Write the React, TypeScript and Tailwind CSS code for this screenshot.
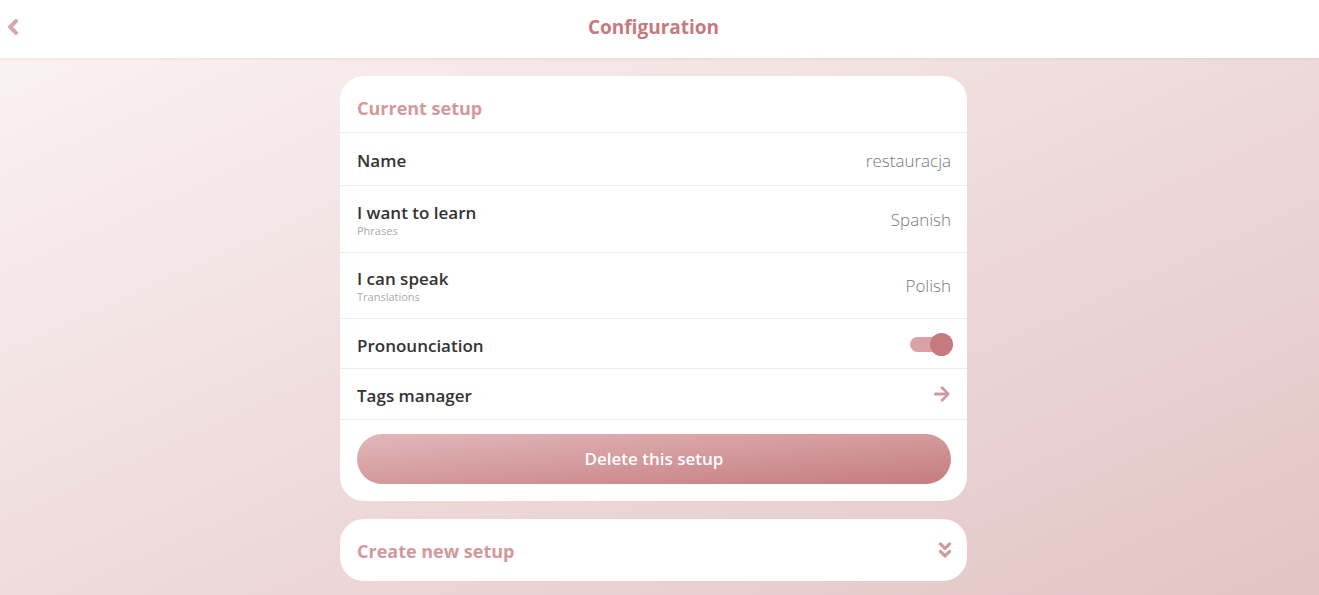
import { FaAngleLeft, FaArrowRight, FaAngleDoubleDown } from 'react-icons/fa';

interface RowProps {
  label: string;
  sub?: string;
  children: React.ReactNode;
  height: string;
}

function Row({ label, sub, children, height }: RowProps) {
  return (
    <div className={`flex items-center justify-between pl-[17px] pr-[16px] border-b border-[#ececec] ${height} ${sub ? 'pt-[1px]' : 'pt-[4px]'}`}>
      <div className="flex flex-col">
        <span className="text-[17px] font-semibold text-[#333] leading-tight">{label}</span>
        {sub && <span className="text-[11px] text-[#aaa] leading-tight mt-[1px]">{sub}</span>}
      </div>
      <div className="text-[17px] font-light text-[#777]">{children}</div>
    </div>
  );
}

export default function App() {
  return (
    <div
      className="min-h-[595px] flex flex-col bg-gradient-to-br from-[#fbf4f4] to-[#e3c4c5]"
      style={{ fontFamily: '"Open Sans", "Noto Sans", sans-serif' }}
    >
      {/* Header */}
      <header className="h-[58px] bg-white shadow-[0_1px_3px_rgba(0,0,0,0.06)] flex items-center relative pr-[12px]">
        <button className="absolute left-[0px] top-[14px] text-[#d8a7ab]">
          <FaAngleLeft size={26} />
        </button>
        <h1 className="w-full text-center text-[19px] font-bold text-[#c47a7e] -mt-[4px]">Configuration</h1>
      </header>

      <main className="flex flex-col items-center pt-[18px] gap-[18px] pb-[14px] pr-[12px]">
        {/* Current setup card */}
        <section className="w-[627px] bg-white rounded-[24px] overflow-hidden">
          <div className="h-[57px] flex items-center px-[17px] pt-[8px] border-b border-[#ececec]">
            <h2 className="text-[18px] font-bold text-[#d4989b]">Current setup</h2>
          </div>
          <Row label="Name" height="h-[53px]">restauracja</Row>
          <Row label="I want to learn" sub="Phrases" height="h-[67px]">Spanish</Row>
          <Row label="I can speak" sub="Translations" height="h-[66px]">Polish</Row>
          <Row label="Pronounciation" height="h-[50px]">
            <div className="relative w-[43px] h-[23px] flex items-center -mt-[3px] -mr-[2px]">
              <div className="w-[34px] h-[15px] rounded-full bg-[#d9a2a5]" />
              <div className="absolute right-0 top-0 w-[23px] h-[23px] rounded-full bg-[#c47a7e]" />
            </div>
          </Row>
          <Row label="Tags manager" height="h-[51px]">
            <FaArrowRight size={18} className="text-[#d0999b] -mt-[4px]" />
          </Row>
          <div className="pl-[17px] pr-[16px] pt-[14px] pb-[17px]">
            <button className="w-full h-[50px] rounded-full bg-gradient-to-br from-[#e2b8ba] to-[#c47c7f] text-white text-[17px] font-semibold">
              Delete this setup
            </button>
          </div>
        </section>

        {/* Create new setup card */}
        <section className="w-[627px] h-[62px] bg-white rounded-[24px] flex items-center justify-between pl-[17px] pr-[16px] pt-[2px]">
          <h2 className="text-[18px] font-bold text-[#d4989b]">Create new setup</h2>
          <FaAngleDoubleDown size={20} className="text-[#d0999b] -mt-[2px] -mr-[4px]" />
        </section>
      </main>
    </div>
  );
}
